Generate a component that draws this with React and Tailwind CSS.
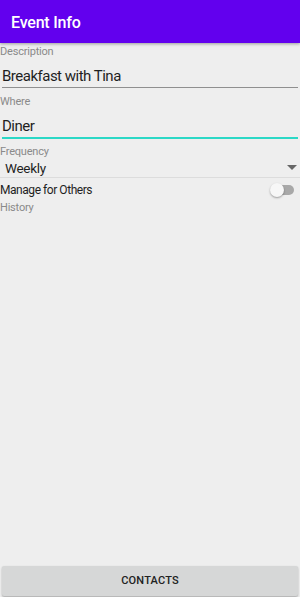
export default function App() {
  return (
    <div className="w-[300px] h-[597px] bg-[#eeeeee] flex flex-col" style={{ fontFamily: 'Roboto, "Noto Sans", sans-serif' }}>
      <div className="h-[43px] bg-[#6200ee] flex items-center pl-[11px] pt-[2px] shadow-[0_1px_3px_rgba(0,0,0,0.35)] z-10 shrink-0">
        <span className="text-white text-[16px] font-medium leading-none tracking-[-0.2px]">Event Info</span>
      </div>
      <div className="flex flex-col flex-1">
        <div className="text-[11px] leading-[13px] text-[#8a8a8a] mt-[2px] tracking-[-0.2px]">Description</div>
        <div className="mx-[2px] mt-[9px] border-b border-[#8f8f8f] pb-[2px]">
          <div className="text-[15px] leading-[18px] text-[#1f1f1f] tracking-[-0.5px]">Breakfast with Tina</div>
        </div>
        <div className="text-[11px] leading-[13px] text-[#8a8a8a] mt-[7px] tracking-[-0.2px]">Where</div>
        <div className="mx-[2px] mt-[9px] border-b-2 border-[#2bd8c6] pb-[2px]">
          <div className="text-[15px] leading-[18px] text-[#1f1f1f] tracking-[-0.5px]">Diner</div>
        </div>
        <div className="text-[11px] leading-[13px] text-[#8a8a8a] mt-[6px] tracking-[-0.2px]">Frequency</div>
        <div className="flex items-center justify-between pl-[5px] pr-[3px] h-[20px] border-b border-[#dcdcdc]">
          <span className="text-[13.5px] leading-[16px] text-[#1f1f1f] tracking-[-0.3px]">Weekly</span>
          <svg width="10" height="5" viewBox="0 0 10 5"><path d="M0 0h10L5 5z" fill="#666" /></svg>
        </div>
        <div className="flex items-center justify-between h-[23px] pr-[6px]">
          <span className="text-[12px] leading-[14px] text-[#1f1f1f] tracking-[-0.45px] mt-[1px]">Manage for Others</span>
          <div className="relative w-[24px] h-[14px] flex items-center mt-[1px]">
            <div className="w-[22px] h-[10px] ml-[2px] rounded-full bg-[#a8a8a8]"></div>
            <div className="absolute left-0 top-0 w-[14px] h-[14px] rounded-full bg-[#f7f7f7] shadow-[0_1px_2px_rgba(0,0,0,0.35)]"></div>
          </div>
        </div>
        <div className="text-[11px] leading-[13px] text-[#8a8a8a] tracking-[-0.2px]">History</div>
        <div className="flex-1"></div>
        <div className="mx-[2px] mb-[1px] h-[30px] rounded-[2px] bg-[#d6d7d7] shadow-[0_1px_2px_rgba(0,0,0,0.3)] flex items-center justify-center">
          <span className="text-[11px] font-medium text-[#222] tracking-[0.2px]">CONTACTS</span>
        </div>
      </div>
    </div>
  );
}
